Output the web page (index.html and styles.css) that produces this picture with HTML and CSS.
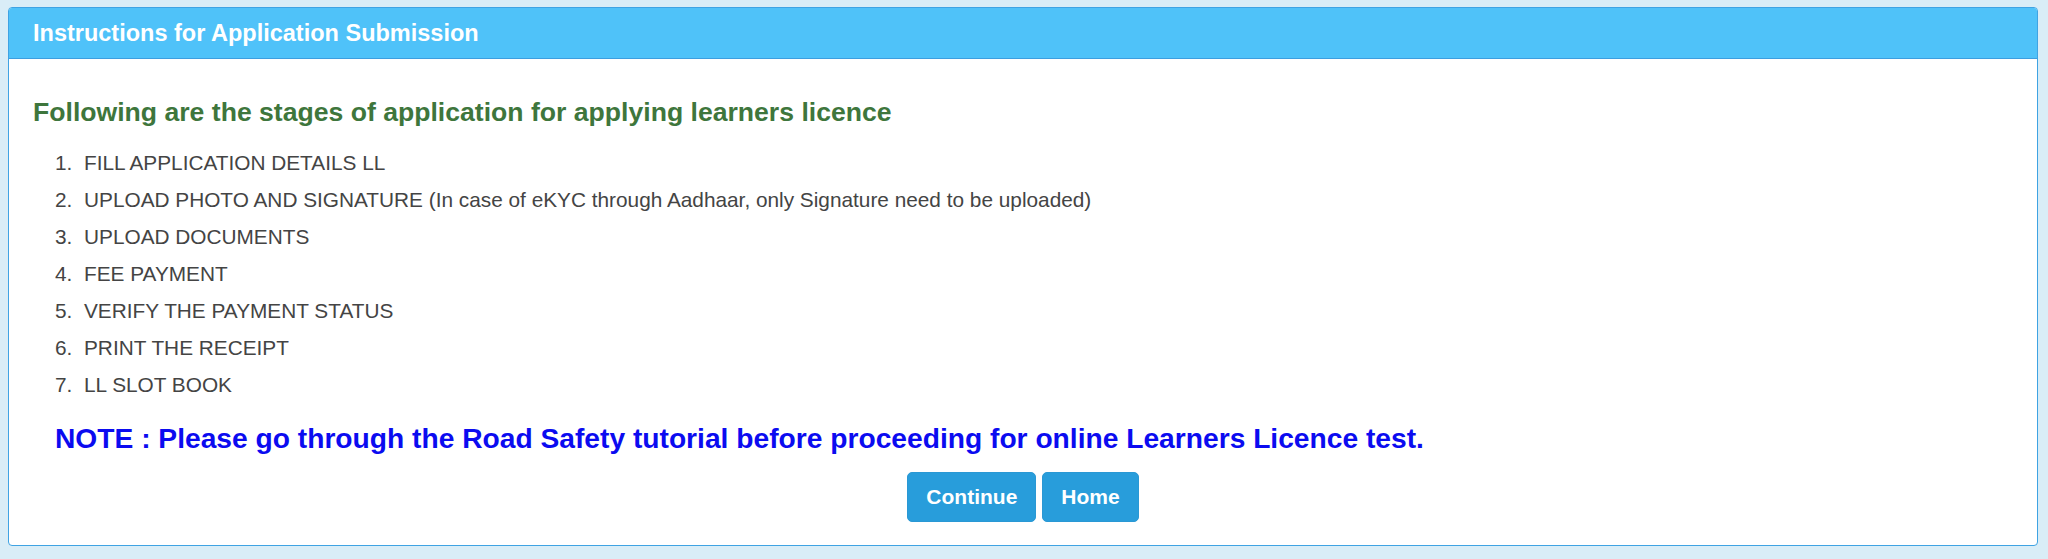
FILE: index.html
```html
<!DOCTYPE html>
<html lang="en">
<head>
    <meta charset="UTF-8">
    <title>Instructions for Application Submission</title>
    <link rel="stylesheet" href="styles.css">
</head>
<body>
    <div class="panel">
        <div class="panel-heading">Instructions for Application Submission</div>
        <div class="panel-body">
            <h3 class="stages">Following are the stages of application for applying learners licence</h3>
            <ol class="steps">
                <li>FILL APPLICATION DETAILS LL</li>
                <li>UPLOAD PHOTO AND SIGNATURE (In case of eKYC through Aadhaar, only Signature need to be uploaded)</li>
                <li>UPLOAD DOCUMENTS</li>
                <li>FEE PAYMENT</li>
                <li>VERIFY THE PAYMENT STATUS</li>
                <li>PRINT THE RECEIPT</li>
                <li>LL SLOT BOOK</li>
            </ol>
            <p class="note">NOTE : Please go through the Road Safety tutorial before proceeding for online Learners Licence test.</p>
            <div class="actions">
                <button class="btn">Continue</button>
                <button class="btn">Home</button>
            </div>
        </div>
    </div>
</body>
</html>
```

FILE: styles.css
```css
body {
    margin: 0;
    padding: 7px 10px 0 8px;
    background-color: #d9edf7;
    font-family: "Liberation Sans", Arial, sans-serif;
}
.panel {
    background-color: #fff;
    border: 1px solid #3fa3e3;
    border-radius: 4px;
    overflow: hidden;
}
.panel-heading {
    height: 50px;
    line-height: 50px;
    padding: 0 24px;
    background-color: #4fc2f9;
    border-bottom: 1px solid #3d9ee0;
    color: #fff;
    font-size: 23.5px;
    font-weight: bold;
}
.panel-body {
    padding: 41px 24px 23px;
}
.stages {
    margin: 0 0 20px;
    color: #3e763c;
    font-size: 26.6px;
    line-height: 24px;
}
.steps {
    margin: 0 0 20px;
    padding-left: 45px;
    color: #444;
    font-size: 20.8px;
    line-height: 37px;
}
.steps li {
    padding-left: 6px;
}
.note {
    margin: 0 0 19px;
    padding-left: 22px;
    color: #0b0bf0;
    font-size: 28.2px;
    font-weight: bold;
    line-height: 30px;
}
.actions {
    display: flex;
    justify-content: center;
    gap: 6px;
}
.btn {
    height: 50px;
    padding: 0 18px;
    background-color: #289ddb;
    border: 1px solid #2a98d4;
    border-radius: 5px;
    color: #fff;
    font-family: "Liberation Sans", Arial, sans-serif;
    font-size: 21px;
    font-weight: bold;
    cursor: pointer;
}
```
